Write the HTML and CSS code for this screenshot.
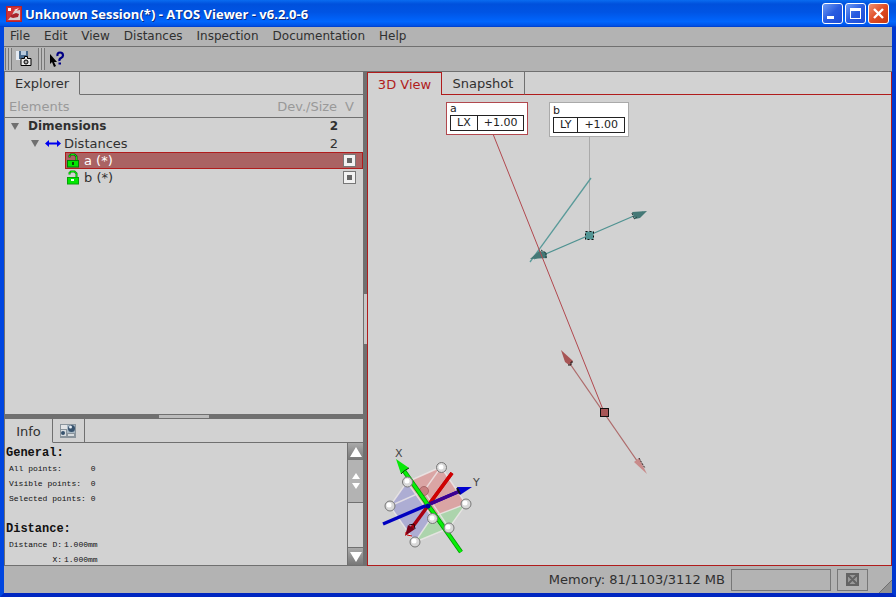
FILE: index.html
```html
<!DOCTYPE html>
<html lang="en">
<head>
<meta charset="utf-8">
<title>Unknown Session(*) - ATOS Viewer - v6.2.0-6</title>
<link rel="stylesheet" href="styles.css">
</head>
<body>
<div class="window">
  <header class="titlebar">
    <svg class="app-icon" width="16" height="16" viewBox="0 0 16 16" aria-hidden="true">
      <rect width="16" height="16" fill="#b8232a"/><rect x="1" y="1" width="14" height="14" fill="#cf3438"/>
      <path d="M2 14L6 9L8 5L14 4V14Z" fill="#d8d0d0"/><path d="M5 9L10 7L13 8L12 11L7 12L4 11Z" fill="#a8242a"/>
      <path d="M2 2h3v3H2zM8 4l5-2l-3 3z" fill="#fff"/>
    </svg>
    <h1 class="title">Unknown Session(*) - ATOS Viewer - v6.2.0-6</h1>
    <div class="window-buttons">
      <button class="win-btn" aria-label="Minimize"><svg width="19" height="19" viewBox="0 0 19 19"><path d="M4 12h7v3H4z" fill="#fff"/></svg></button>
      <button class="win-btn" aria-label="Maximize"><svg width="19" height="19" viewBox="0 0 19 19"><path d="M4 4h11v11H4zM5 7v7h9V7z" fill="#fff" fill-rule="evenodd"/></svg></button>
      <button class="win-btn win-close" aria-label="Close"><svg width="19" height="19" viewBox="0 0 19 19"><path d="M5 5l9 9M14 5l-9 9" stroke="#fff" stroke-width="2.4"/></svg></button>
    </div>
  </header>

  <nav class="menubar">
    <button>File</button><button>Edit</button><button>View</button><button>Distances</button><button>Inspection</button><button>Documentation</button><button>Help</button>
  </nav>

  <div class="toolbar">
    <span class="grip"></span>
    <button class="tool" aria-label="Save snapshot"><svg width="16" height="16" viewBox="0 0 16 16">
      <path d="M0 0h9v9H0z" fill="#e4eaf2"/><path d="M3 0h9v8H3z" fill="#48698c"/><path d="M5 0h5v4H5z" fill="#b8cadd"/>
      <path d="M5.500 7.500h3v-2h3v2h3.500v7h-10v-7z" fill="#e8e8e8" stroke="#000"/><circle cx="10" cy="11" r="2" fill="#aaa" stroke="#000"/>
    </svg></button>
    <span class="grip"></span>
    <button class="tool" aria-label="What's this?"><svg width="16" height="16" viewBox="0 0 16 16">
      <path d="M1 3v10l2-2 2 5 2-1-2-4h3z" fill="#000"/>
      <path d="M8.500 5Q8 1.500 11 1.500t3 3q0 1.500-2 2.500t-1.500 3" fill="none" stroke="#000084" stroke-width="2.200"/><path d="M9.500 11.500h2.500v2h-2.500z" fill="#000084"/>
    </svg></button>
  </div>

  <main class="workspace">
    <div class="side">
      <section class="explorer">
        <div class="tabs"><button class="tab tab-explorer active">Explorer</button><span class="tab-fill"></span></div>
        <div class="tree-head"><span class="grow">Elements</span><span>Dev./Size</span><span class="col-v">V</span></div>
        <ul class="tree">
          <li class="row row-group"><span class="twist"></span><span class="grow">Dimensions</span><span class="count">2</span></li>
          <li class="row row-sub"><span class="twist"></span>
            <svg width="16" height="9" viewBox="0 0 16 9" aria-hidden="true"><path d="M0 4.500L4 1v2.500h8V1l4 3.500L12 8V5.500H4V8z" fill="#0000f0"/></svg>
            <span class="grow">Distances</span><span class="count">2</span></li>
          <li class="row row-item selected">
            <svg class="lock" width="12" height="15" viewBox="0 0 12 15" aria-hidden="true"><path d="M2.500 4.500V3L4 1.500H7.500L9.500 3.500V8" fill="none" stroke="#0a5a0a" stroke-width="2"/><path d="M2.500 4V3L4 1.500H7.500L9.500 3.500V8" fill="none" stroke="#00f000"/><rect x=".5" y="7.500" width="11" height="6.500" fill="#00e800" stroke="#057805"/><path d="M5 9h2v3H5z" fill="#054805"/></svg>
            <label class="grow" for="show-a">a (*)</label><input type="checkbox" id="show-a" checked></li>
          <li class="row row-item">
            <svg class="lock" width="12" height="15" viewBox="0 0 12 15" aria-hidden="true"><path d="M2.500 4.500V3L4 1.500H7.500L9.500 3.500V8" fill="none" stroke="#0a8a0a" stroke-width="2"/><path d="M2.500 4V3L4 1.500H7.500L9.500 3.500V8" fill="none" stroke="#00f000"/><rect x=".5" y="7.500" width="11" height="6.500" fill="#00e800" stroke="#08a008"/><path d="M4 9h3v2H4z" fill="#e8ffe8"/></svg>
            <label class="grow" for="show-b">b (*)</label><input type="checkbox" id="show-b" checked></li>
        </ul>
      </section>
      <div class="split-h"><span></span></div>
      <section class="info">
        <div class="tabs tabs-info"><button class="tab tab-info active">Info</button><button class="tab tab-icon" aria-label="Preview"><svg width="16" height="14" viewBox="0 0 16 14">
          <path d="M0 0h16v14H0z" fill="#8a949c"/><path d="M1 1h6v4H1z" fill="#e2e4e6"/><path d="M7 1h8v8H7z" fill="#a8b8c4"/><path d="M1 6h5v6H1z" fill="#d8dde0"/><circle cx="11.500" cy="4.500" r="3.500" fill="#38536e"/><circle cx="10.500" cy="3" r="1.500" fill="#e8f0f6"/><circle cx="3" cy="9" r="2" fill="#38536e"/><path d="M8 10h6v2H8z" fill="#d8dde0"/>
        </svg></button><span class="tab-fill"></span></div>
        <div class="info-body">
          <div class="info-text">
            <h2>General:</h2>
            <table>
              <tr><th>All points:</th><td>0</td></tr>
              <tr><th>Visible points:</th><td>0</td></tr>
              <tr><th>Selected points:</th><td>0</td></tr>
            </table>
            <h2 class="second">Distance:</h2>
            <table>
              <tr><th>Distance</th><th class="axis">D:</th><td>1.000mm</td></tr>
              <tr><th></th><th class="axis">X:</th><td>1.000mm</td></tr>
            </table>
          </div>
          <div class="scroll">
            <button class="scroll-btn" aria-label="Scroll up"><svg width="12" height="10" viewBox="0 0 12 10"><path d="M6 0l6 10H0z" fill="#fff"/></svg></button>
            <div class="thumb"><svg width="8" height="16" viewBox="0 0 8 16"><path d="M4 0l4 6H0zM4 16l4-6H0z" fill="#fff"/></svg></div>
            <div class="track"></div>
            <button class="scroll-btn" aria-label="Scroll down"><svg width="12" height="10" viewBox="0 0 12 10"><path d="M6 10l6-10H0z" fill="#fff"/></svg></button>
          </div>
        </div>
      </section>
    </div>
    <div class="split-v"><span></span></div>
    <section class="view">
      <div class="tabs tabs-view"><button class="tab tab-3d active">3D View</button><button class="tab tab-snap">Snapshot</button><span class="tab-fill"></span></div>
      <div class="canvas">
        <svg class="scene" width="524" height="470" viewBox="368 95 524 470" role="img" aria-label="Distances and axes">
          <path d="M589.500 137V235" stroke="#aaa" fill="none"/>
          <path d="M591 178L530 262" stroke="#599a99" stroke-width="1.300"/>
          <path d="M534 259L643 212" stroke="#4f9291" stroke-width="1.200"/>
          <path d="M530 259l9-8 7 1 1 6z" fill="#447876"/><path d="M541 250l5 3v6" stroke="#223838" fill="none" stroke-dasharray="2 1"/>
          <path d="M647 211l-15 1 3 7 5-1z" fill="#447876"/><path d="M632 213l2 6 3-2" stroke="#223838" fill="none" stroke-dasharray="2 1"/>
          <rect x="585.500" y="231.500" width="8" height="8" fill="#519493" stroke="#111" stroke-dasharray="2 2"/>
          <path d="M493 134L604 412" stroke="#b1484e" fill="none"/>
          <path d="M566 358L642 468" stroke="#ae6b6b" stroke-width="1.300"/>
          <path d="M561 350l12 11-4 4-4-3z" fill="#a75555"/><path d="M568 365h3v-3h2" stroke="#201010" fill="none"/>
          <path d="M647 474l-13-12 5-4z" fill="#c88b8a"/><path d="M639 458l4 7 2 3" stroke="#302020" fill="none" stroke-dasharray="2 1"/>
          <rect x="600.500" y="408.500" width="8" height="8" fill="#a85757" stroke="#111"/>

          <path d="M407 482L441 467L466 504L432 517Z" fill="#df8d8c" fill-opacity=".65"/>
          <path d="M407 482L390 506L415 542L432 517Z" fill="#9999d4" fill-opacity=".65"/>
          <path d="M432 517L466 504L449 528L415 542Z" fill="#98d698" fill-opacity=".65"/>
          <path d="M407 482L441 467L466 504L432 517ZM407 482L390 506L415 542L432 517M415 542L449 528L466 504M390 506L424 491L441 467M424 491L449 528" fill="none" stroke="#eee9e9" stroke-opacity=".8" stroke-width="1.400"/>
          <circle cx="424" cy="491" r="4.500" fill="#c98080" stroke="#a96868"/>
          <path d="M452 473L411 529" stroke="#a80010" stroke-width="3.500"/><path d="M452 473L430 503" stroke="#d00000" stroke-width="3.500"/>
          <path d="M405 536l3-11 7 4z" fill="#780018"/><path d="M409 525l5-1 1 5" stroke="#220008" fill="none"/><path d="M406 535v-3M407 535l5 1" stroke="#d00000"/>
          <path d="M383 524L460 491" stroke="#0000c0" stroke-width="3.500"/><path d="M430 504L460 491" stroke="#400090" stroke-width="3"/>
          <path d="M472 487l-15 0 3 8z" fill="#0000d0"/><path d="M457 488l3 6" stroke="#101020" stroke-width="2"/>
          <path d="M402 468L461 552" stroke="#009800" stroke-width="4.500"/><path d="M402 468L461 552" stroke="#08f008" stroke-width="3"/>
          <path d="M396 459l13 9-8 6z" fill="#08e808"/><path d="M401 474l3-3 5-3" stroke="#064806" fill="none"/>
          <circle cx="428" cy="506" r="2.500" fill="#0000a0"/>
          <g stroke="#777" fill="#d8d8d8"><circle cx="441.500" cy="467.500" r="5"/><circle cx="407.500" cy="482" r="5"/><circle cx="390" cy="506" r="5"/><circle cx="466" cy="504" r="5"/><circle cx="432.500" cy="518.500" r="5"/><circle cx="449" cy="528" r="5"/><circle cx="415" cy="542" r="5"/></g>
          <g fill="#fff"><circle cx="441" cy="467" r="2.500"/><circle cx="407" cy="481" r="2.500"/><circle cx="389" cy="505" r="2.500"/><circle cx="465" cy="503" r="2.500"/><circle cx="432" cy="518" r="2.500"/><circle cx="448" cy="527" r="2.500"/><circle cx="414" cy="541" r="2.500"/></g>
          <text class="axis-name" x="395" y="457">X</text><text class="axis-name" x="473" y="486">Y</text>
        </svg>
        <div class="tag tag-a"><span>a</span><div class="cells"><b>LX</b><b>+1.00</b></div></div>
        <div class="tag tag-b"><span>b</span><div class="cells"><b>LY</b><b>+1.00</b></div></div>
      </div>
    </section>
  </main>

  <footer class="status">
    <span>Memory: 81/1103/3112 MB</span>
    <div class="progress"></div>
    <button class="abort" aria-label="Abort"><svg width="13" height="13" viewBox="0 0 13 13"><path d="M1 1h11v11H1zM1 1l11 11M12 1L1 12" fill="#999" stroke="#646464" stroke-width="2"/></svg></button>
    <svg class="resize" width="13" height="13" viewBox="0 0 13 13" aria-hidden="true"><path d="M13 0v13H0z" fill="#929292"/><path d="M0 13L13 0" stroke="#707070"/></svg>
  </footer>
</div>
</body>
</html>
```
FILE: styles.css
```css
* { box-sizing: border-box; }
body { margin: 0; font: 13px/17px "DejaVu Sans", sans-serif; color: #303030; }
button { font: inherit; color: inherit; background: none; border: 0; padding: 0; margin: 0; }
svg { display: block; flex: none; }
h1, h2, ul { margin: 0; padding: 0; }
.grow { flex: 1; }

.window {
  display: flex; flex-direction: column; height: 100vh;
  background: #b3b3b3;
  border: solid #0046e0; border-width: 0 4px 4px;
  border-right-color: #0038d0; border-bottom-color: #0026c0;
}

.titlebar {
  display: flex; align-items: center; height: 27px; margin: 0 -4px; padding: 0 7px 0 6px; flex: none;
  background: linear-gradient(#0a6cf0 0, #0050dc 15%, #0054e4 45%, #0066fe 80%, #0054e8 94%, #003cc8 100%);
}
.title { flex: 1; margin-left: 3px; font: bold 13px/16px "Open Sans", sans-serif; color: #fff; text-shadow: 1px 1px #0a2a80; }
.window-buttons { display: flex; gap: 2px; }
.win-btn { width: 21px; height: 21px; border: 1px solid #fff; border-radius: 3px; background: linear-gradient(135deg, #6f9cf4, #2a5ce0 50%, #1c4cd8); }
.win-close { background: linear-gradient(135deg, #f09070, #e04c24 50%, #c83810); }

.menubar { display: flex; gap: 14px; height: 20px; padding: 0 6px; flex: none; font-size: 12px; border-bottom: 1px solid #707070; }
.toolbar { display: flex; align-items: center; gap: 4px; height: 25px; padding: 0 1px; flex: none; border-bottom: 1px solid #707070; }
.grip { width: 7px; height: 22px; background: repeating-linear-gradient(90deg, #777 0 1px, #bbb 1px 3px); }
.tool { width: 18px; }

.workspace { display: flex; flex: 1; min-height: 0; background: #d2d2d2; }
.side { display: flex; flex-direction: column; width: 45%; max-width: 359px; border-left: 1px solid #707070; }
.explorer { flex: 1; }
.tabs { display: flex; height: 23px; }
.tab { border: 1px solid #707070; border-width: 0 1px 1px 0; }
.tab.active { border-bottom-color: transparent; }
.tab-fill { flex: 1; border-bottom: 1px solid #707070; }
.tab-explorer { width: 75px; }
.tree-head { display: flex; height: 23px; padding: 3px 9px 0 4px; color: #999; border-bottom: 1px solid #707070; }
.col-v { margin-left: 8px; }
.tree { list-style: none; }
.row { display: flex; align-items: center; height: 17px; padding-right: 7px; }
.row-group { padding-left: 6px; font-size: 12px; font-weight: bold; }
.row-sub { padding-left: 26px; }
.row-sub .grow { margin-left: 3px; }
.row-group .grow { margin-left: 9px; }
.row-sub .twist { margin-right: 6px; }
.twist { border: 4px solid transparent; border-top: 7px solid #707070; border-bottom: 0; }
.count { margin-right: 18px; }
.row-item { margin-left: 60px; padding-left: 2px; }
.row-item .grow { margin-left: 5px; }
.selected { color: #fff; background: #aa6363; box-shadow: inset 0 0 0 1px #b01c1c; }
input[type=checkbox] { appearance: none; width: 13px; height: 13px; margin: 0; border: 1px solid #777; background: linear-gradient(#666, #666) center / 5px 5px no-repeat #f2f2f2; }

.split-h { display: flex; justify-content: center; height: 5px; flex: none; background: #707070; }
.split-h span { width: 50px; margin: 1px 0; background: #bcbcbc; }
.split-v { display: flex; align-items: center; width: 4px; flex: none; background: #707070; }
.split-v span { width: 3px; height: 50px; margin-left: 1px; background: #c8c8c8; }

.info { display: flex; flex-direction: column; height: 147px; border-bottom: 1px solid #707070; }
.tabs-info { height: 24px; flex: none; }
.tab-info { width: 48px; padding-top: 2px; }
.tab-icon { width: 32px; padding-left: 7px; }
.info-body { display: flex; flex: 1; min-height: 0; }
.info-text { flex: 1; overflow: hidden; padding: 2px 1px; font: 8px/15px "Liberation Mono", monospace; color: #111; }
.info-text h2 { font: bold 12px/16px "Liberation Mono", monospace; }
.info-text .second { margin-top: 15px; }
.info-text table { border-collapse: collapse; margin-left: 3px; }
.info-text th, .info-text td { padding: 0 5px 0 0; height: 15px; font-weight: normal; text-align: left; }
.info-text .axis { padding: 0 2px 0 0; }
.scroll { display: flex; flex-direction: column; width: 16px; border-left: 1px solid #707070; }
.scroll-btn { display: flex; align-items: center; justify-content: center; height: 17px; background: linear-gradient(#aaa, #777); }
.thumb { display: flex; align-items: center; justify-content: center; height: 43px; background: #b3b3b3; border-bottom: 1px solid #707070; }
.track { flex: 1; border-bottom: 1px solid #707070; }

.view { display: flex; flex-direction: column; flex: 1; border: 1px solid #b01c1c; border-top: 0; }
.tabs-view .tab, .tabs-view .tab-fill { border-bottom-color: #b01c1c; }
.tabs-view .tab.active { width: 74px; color: #b01c1c; border-color: #b01c1c; border-width: 1px 1px 0 0; }
.tab-snap { width: 83px; }
.canvas { position: relative; flex: 1; overflow: hidden; }
.scene { position: absolute; left: 0; top: 0; }
.axis-name { font: 11px "DejaVu Sans", sans-serif; fill: #444; }
.tag { position: absolute; top: 7px; padding: 0 3px 3px; background: #fff; border: 1px solid #aaa; font-size: 11px; line-height: 12px; color: #222; }
.tag-a { left: 78px; border-color: #b1484e; }
.tag-b { left: 181px; }
.tag span { display: block; }
.tag-b span { padding-top: 2px; }
.cells { display: flex; border: 1px solid #222; }
.cells b { padding: 1px 6px; line-height: 12px; font-weight: normal; }
.cells b + b { border-left: 1px solid #222; }

.status { display: flex; align-items: center; justify-content: flex-end; height: 27px; flex: none; }
.progress { width: 100px; height: 22px; margin: 0 6px; border: 1px solid #777; }
.abort { display: flex; align-items: center; justify-content: center; width: 31px; height: 22px; border: 1px solid #777; }
.resize { align-self: flex-end; margin-left: 11px; }
```
